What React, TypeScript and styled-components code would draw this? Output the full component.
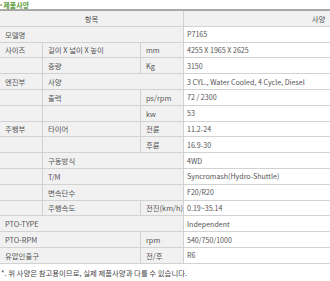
import styled, { createGlobalStyle } from 'styled-components';

const GlobalStyle = createGlobalStyle`
  html, body {
    margin: 0;
    padding: 0;
    overflow: hidden;
    background: #ffffff;
  }
  body {
    font-family: "Noto Sans CJK KR", "Noto Sans", sans-serif;
    color: #444;
  }
`;

type Row = {
  cells: { text: string; span?: number }[];
  value: string;
};

const rows: Row[] = [
  { cells: [{ text: '모델명', span: 3 }], value: 'P7165' },
  { cells: [{ text: '사이즈' }, { text: '길이 X 넓이 X 높이' }, { text: 'mm' }], value: '4255 X 1965 X 2625' },
  { cells: [{ text: '' }, { text: '중량' }, { text: 'Kg' }], value: '3150' },
  { cells: [{ text: '엔진부' }, { text: '사양', span: 2 }], value: '3 CYL., Water Cooled, 4 Cycle, Diesel' },
  { cells: [{ text: '' }, { text: '출력' }, { text: 'ps/rpm' }], value: '72 / 2300' },
  { cells: [{ text: '' }, { text: '' }, { text: 'kw' }], value: '53' },
  { cells: [{ text: '주행부' }, { text: '타이어' }, { text: '전륜' }], value: '11.2-24' },
  { cells: [{ text: '' }, { text: '' }, { text: '후륜' }], value: '16.9-30' },
  { cells: [{ text: '' }, { text: '구동방식', span: 2 }], value: '4WD' },
  { cells: [{ text: '' }, { text: 'T/M', span: 2 }], value: 'Syncromash(Hydro-Shuttle)' },
  { cells: [{ text: '' }, { text: '변속단수', span: 2 }], value: 'F20/R20' },
  { cells: [{ text: '' }, { text: '주행속도' }, { text: '전진(km/h)' }], value: '0.19~35.14' },
  { cells: [{ text: 'PTO-TYPE', span: 3 }], value: 'Independent' },
  { cells: [{ text: 'PTO-RPM', span: 2 }, { text: 'rpm' }], value: '540/750/1000' },
  { cells: [{ text: '유압인출구', span: 2 }, { text: '전/후' }], value: 'R6' },
];

export default function App() {
  return (
    <>
      <GlobalStyle />
      <Page>
        <Title>
          <Bullet>•</Bullet>제품사양
        </Title>
        <SpecGrid>
          <HeadCell $span={3}>항목</HeadCell>
          <HeadCell>사양</HeadCell>
          {rows.map((row, i) => (
            <RowGroup key={i}>
              {row.cells.map((c, j) => (
                <LabelCell key={j} $span={c.span ?? 1}>
                  {c.text}
                </LabelCell>
              ))}
              <ValueCell>{row.value}</ValueCell>
            </RowGroup>
          ))}
        </SpecGrid>
        <Note>*. 위 사양은 참고용이므로, 실제 제품사양과 다를 수 있습니다.</Note>
      </Page>
    </>
  );
}

const Page = styled.div`
  width: 453px;
  padding: 1px 0 0 0;
`;

const Title = styled.div`
  display: flex;
  align-items: center;
  height: 8px;
  font-size: 7px;
  font-weight: bold;
  color: #5b9b3c;
  line-height: 8px;
`;

const Bullet = styled.span`
  font-size: 6px;
  margin-right: 1px;
  color: #5b9b3c;
`;

const SpecGrid = styled.div`
  display: grid;
  grid-template-columns: 42px 97px 42px 1fr;
  grid-auto-rows: 14.8px;
  gap: 1px;
  background: #d2d2d2;
  border-top: 2px solid #a8a8a8;
  border-bottom: 1px solid #d2d2d2;
`;

const RowGroup = styled.div`
  display: contents;
`;

const Cell = styled.div<{ $span?: number }>`
  grid-column: span ${p => p.$span ?? 1};
  display: flex;
  align-items: center;
  padding: 0 5px;
  font-size: 7.4px;
  white-space: nowrap;
  overflow: hidden;
`;

const HeadCell = styled(Cell)`
  justify-content: center;
  background: #f1f1f1;
  color: #555;
`;

const LabelCell = styled(Cell)`
  background: #f1f1f1;
  color: #555;
`;

const ValueCell = styled(Cell)`
  background: #ffffff;
  color: #555;
  padding-left: 3px;
  font-size: 7.1px;
`;

const Note = styled.div`
  font-size: 7.4px;
  color: #444;
  padding: 3px 0 0 1px;
`;
